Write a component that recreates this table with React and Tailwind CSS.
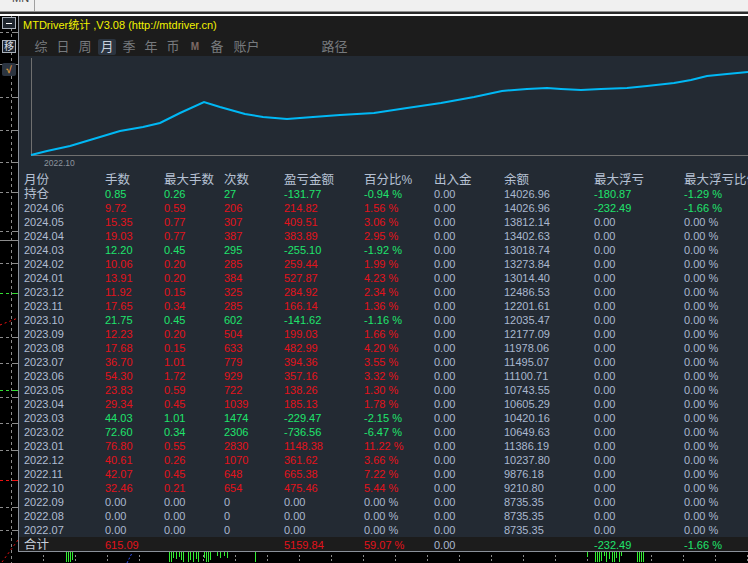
import React from "react";

const ROWS = [
  ["2024.06", "9.72", "0.59", "206", "214.82", "1.56 %", "14026.96", "-232.49", "-1.66 %"],
  ["2024.05", "15.35", "0.77", "307", "409.51", "3.06 %", "13812.14", "0.00", "0.00 %"],
  ["2024.04", "19.03", "0.77", "387", "383.89", "2.95 %", "13402.63", "0.00", "0.00 %"],
  ["2024.03", "12.20", "0.45", "295", "-255.10", "-1.92 %", "13018.74", "0.00", "0.00 %"],
  ["2024.02", "10.06", "0.20", "285", "259.44", "1.99 %", "13273.84", "0.00", "0.00 %"],
  ["2024.01", "13.91", "0.20", "384", "527.87", "4.23 %", "13014.40", "0.00", "0.00 %"],
  ["2023.12", "11.92", "0.15", "325", "284.92", "2.34 %", "12486.53", "0.00", "0.00 %"],
  ["2023.11", "17.65", "0.34", "285", "166.14", "1.36 %", "12201.61", "0.00", "0.00 %"],
  ["2023.10", "21.75", "0.45", "602", "-141.62", "-1.16 %", "12035.47", "0.00", "0.00 %"],
  ["2023.09", "12.23", "0.20", "504", "199.03", "1.66 %", "12177.09", "0.00", "0.00 %"],
  ["2023.08", "17.68", "0.15", "633", "482.99", "4.20 %", "11978.06", "0.00", "0.00 %"],
  ["2023.07", "36.70", "1.01", "779", "394.36", "3.55 %", "11495.07", "0.00", "0.00 %"],
  ["2023.06", "54.30", "1.72", "929", "357.16", "3.32 %", "11100.71", "0.00", "0.00 %"],
  ["2023.05", "23.83", "0.59", "722", "138.26", "1.30 %", "10743.55", "0.00", "0.00 %"],
  ["2023.04", "29.34", "0.45", "1039", "185.13", "1.78 %", "10605.29", "0.00", "0.00 %"],
  ["2023.03", "44.03", "1.01", "1474", "-229.47", "-2.15 %", "10420.16", "0.00", "0.00 %"],
  ["2023.02", "72.60", "0.34", "2306", "-736.56", "-6.47 %", "10649.63", "0.00", "0.00 %"],
  ["2023.01", "76.80", "0.55", "2830", "1148.38", "11.22 %", "11386.19", "0.00", "0.00 %"],
  ["2022.12", "40.61", "0.26", "1070", "361.62", "3.66 %", "10237.80", "0.00", "0.00 %"],
  ["2022.11", "42.07", "0.45", "648", "665.38", "7.22 %", "9876.18", "0.00", "0.00 %"],
  ["2022.10", "32.46", "0.21", "654", "475.46", "5.44 %", "9210.80", "0.00", "0.00 %"],
  ["2022.09", "0.00", "0.00", "0", "0.00", "0.00 %", "8735.35", "0.00", "0.00 %"],
  ["2022.08", "0.00", "0.00", "0", "0.00", "0.00 %", "8735.35", "0.00", "0.00 %"],
  ["2022.07", "0.00", "0.00", "0", "0.00", "0.00 %", "8735.35", "0.00", "0.00 %"],
];

const HEADERS = ["月份", "手数", "最大手数", "次数", "盈亏金额", "百分比%", "出入金", "余额", "最大浮亏", "最大浮亏比例"];

const TABS = ["综", "日", "周", "月", "季", "年", "币", "M", "备"];

const RED = "text-[#e3121b]";
const GREEN = "text-[#1fe46c]";
const GRAY = "text-[#aab8cf]";

const COLS = "grid grid-cols-[81px_59px_60px_60px_80px_70px_70px_90px_90px_120px]";

const LINE = [
  [12, 99], [28, 95], [51, 90], [81, 81], [101, 75], [124, 71], [141, 67], [161, 57],
  [185, 46], [201, 51], [226, 58], [244, 61], [268, 63], [294, 61], [321, 59], [355, 57],
  [388, 52], [422, 47], [455, 41], [483, 35], [508, 33], [528, 32], [542, 33], [562, 34],
  [582, 33], [608, 32], [628, 30], [655, 27], [672, 24], [688, 20], [708, 18], [729, 16],
];

// price-axis ticks on the left strip: [y, colour]
const TICKS = [
  [16, "#8c8c8c"], [48, "#8c8c8c"], [81, "#8c8c8c"], [114, "#8c8c8c"], [146, "#8c8c8c"],
  [176, "#8c8c8c"], [215, "#8c8c8c"], [247, "#8c8c8c"], [277, "#33dd33"], [321, "#8c8c8c"],
  [347, "#8c8c8c"], [374, "#33dd33"], [381, "#8c8c8c"], [407, "#8c8c8c"], [434, "#8c8c8c"],
  [464, "#ee1111"], [491, "#8c8c8c"], [514, "#8c8c8c"],
];

// volume bars in the bottom strip: [x, length]
const BARS = [
  [48, 10], [50, 10], [52, 10], [54, 8],
  [151, 10], [153, 10], [155, 6], [158, 7], [161, 5], [163, 8], [165, 10], [170, 10],
  [172, 8], [175, 10], [178, 7], [180, 10], [186, 6], [188, 10], [190, 10], [192, 8],
  [199, 4], [202, 6], [206, 4], [209, 6], [237, 10],
  [569, 5], [577, 10], [579, 10], [581, 10], [583, 9], [586, 4], [588, 10], [591, 7],
  [594, 10], [596, 10], [598, 6], [601, 10], [603, 4],
  [619, 10], [621, 10], [623, 10], [625, 10],
];

function cellColor(pnl) {
  if (pnl === "0.00") return GRAY;
  return pnl.startsWith("-") ? GREEN : RED;
}

function Cjk({ children, className = "" }) {
  return <span className={`text-[12.5px] ${className}`}>{children}</span>;
}

function LeftStrip() {
  return (
    <div className="relative w-[18px] shrink-0 bg-black">
      <svg className="absolute inset-0" width="18" height="547">
        <line x1="11.5" y1="0" x2="11.5" y2="547" stroke="#8c8c8c" strokeDasharray="3 3" />
        <line x1="0" y1="224.5" x2="18" y2="224.5" stroke="#8c8c8c" />
        {TICKS.map(([y, c]) => (
          <g key={y}>
            <line x1="0" y1={y + 0.5} x2="11" y2={y + 0.5} stroke={c} strokeDasharray="3 3" />
            <line x1="12" y1={y + 0.5} x2="18" y2={y + 0.5} stroke={c} />
          </g>
        ))}
        <line x1="0" y1="309" x2="18" y2="302" stroke="#ee1111" strokeDasharray="2 3" />
        <line x1="2" y1="546" x2="18" y2="524" stroke="#ee1111" strokeDasharray="2 3" />
      </svg>
      <div className="relative flex flex-col items-center pt-[1px]">
        <div className="flex h-[12px] w-[14px] items-center justify-center border border-[#a9b1bb] bg-[#1e252e]">
          <div className="h-[1px] w-[6px] bg-white" />
        </div>
        <div className="mt-[11px] flex h-[13px] w-[14px] items-center justify-center border border-[#a9b1bb] bg-[#1e252e] text-[10px] leading-none text-[#d6dde6]">
          移
        </div>
        <div className="mt-[10px] flex h-[13px] w-[14px] items-center justify-center rounded-[2px] bg-[#2b3440] text-[10px] font-bold leading-none text-[#e39a3a]">
          √
        </div>
      </div>
    </div>
  );
}

function Chart() {
  return (
    <svg width="729" height="117" className="block">
      <line x1="12.5" y1="2" x2="12.5" y2="99" stroke="#707070" />
      <line x1="12" y1="99.5" x2="729" y2="99.5" stroke="#707070" />
      <polyline
        points={LINE.map((p) => p.join(",")).join(" ")}
        fill="none"
        stroke="#00b8f5"
        strokeWidth="2"
      />
      <text x="25" y="110" fontSize="8.5" fill="#8d949e" fontFamily="Liberation Sans, sans-serif">
        2022.10
      </text>
    </svg>
  );
}

function BottomStrip() {
  const ticks = [];
  for (let x = 25; x < 730; x += 32) ticks.push(x);
  return (
    <svg width="730" height="11" className="block">
      {ticks.map((x) => (
        <line key={x} x1={x + 0.5} y1="3" x2={x + 0.5} y2="11" stroke="#8c8c8c" strokeDasharray="2 2" />
      ))}
      {BARS.map(([x, h]) => (
        <line key={x} x1={x + 0.5} y1="0" x2={x + 0.5} y2={h} stroke="#33ee33" />
      ))}
      <line x1="109" y1="11" x2="114" y2="1" stroke="#3355ff" strokeDasharray="2 2" />
    </svg>
  );
}

export default function App() {
  return (
    <div className="flex h-[563px] w-[748px] flex-col overflow-hidden bg-black font-['Liberation_Sans','Noto_Sans_CJK_SC',sans-serif]">
      {/* ── Terminal strip above ── */}
      <div className="flex h-[11px] shrink-0 bg-[#f0f0f0]">
        <div className="w-[35px] overflow-hidden border-r border-[#a0a0a0] pl-[12px] text-[11px] leading-none text-[#444]">
          <div className="-mt-[7px]">MN</div>
        </div>
      </div>
      <div className="h-[1px] shrink-0 bg-[#909090]" />
      <div className="h-[2px] shrink-0 bg-[#2a2a2a]" />
      <div className="h-[2px] shrink-0 bg-white" />

      <div className="flex min-h-0 flex-1">
        <LeftStrip />

        <div className="flex min-w-0 flex-1 flex-col">
          {/* ── Stats panel ── */}
          <div className="flex flex-col border-b border-l border-[#8a9099] bg-[#232a33]">
            <div className="h-[40px] bg-[#1c1c1c]">
              <div className="h-[17px] whitespace-nowrap pl-[4px] pt-[1px] text-[11px] leading-[16px] text-[#f2f200]">
                MTDriver统计 ,V3.08 (http://mtdriver.cn)
              </div>
              <div className="mt-[6px] flex h-[16px] items-center pl-[11px] text-[13px] leading-[16px] text-[#777a7e]">
                {TABS.map((t) =>
                  t === "月" ? (
                    <div key={t} className="flex w-[22px] justify-center">
                      <span className="w-[18px] rounded-[2px] bg-[#2b3440] text-center text-[#c9d1dc]">{t}</span>
                    </div>
                  ) : t === "M" ? (
                    <div key={t} className="w-[22px] text-center text-[10px] font-bold text-[#7d6a66]">
                      {t}
                    </div>
                  ) : (
                    <div key={t} className="w-[22px] text-center">
                      {t}
                    </div>
                  )
                )}
                <div className="w-[37px] text-center">账户</div>
                <div className="ml-[51px] w-[37px] text-center">路径</div>
              </div>
            </div>

            <Chart />

            {/* ── Table ── */}
            <div className="whitespace-nowrap text-[11px] leading-[14px]">
              <div className={`${COLS} h-[14px] pl-[5px] text-[#b6c1d3]`}>
                {HEADERS.map((h) =>
                  h === "百分比%" ? (
                    <div key={h}>
                      <Cjk>百分比</Cjk>
                      <span className="text-[12px]">%</span>
                    </div>
                  ) : (
                    <div key={h}>
                      <Cjk>{h}</Cjk>
                    </div>
                  )
                )}
              </div>

              <div className={`${COLS} h-[14px] pl-[5px]`}>
                <div className="text-[#b6c1d3]">
                  <Cjk>持仓</Cjk>
                </div>
                <div className={GREEN}>0.85</div>
                <div className={GREEN}>0.26</div>
                <div className={GREEN}>27</div>
                <div className={GREEN}>-131.77</div>
                <div className={GREEN}>-0.94 %</div>
                <div className={GRAY}>0.00</div>
                <div className={GRAY}>14026.96</div>
                <div className={GREEN}>-180.87</div>
                <div className={GREEN}>-1.29 %</div>
              </div>

              {ROWS.map(([m, lots, maxLots, count, pnl, pct, bal, dd, ddPct]) => {
                const c = cellColor(pnl);
                const d = dd === "0.00" ? GRAY : GREEN;
                return (
                  <div key={m} className={`${COLS} h-[14px] pl-[5px]`}>
                    <div className="text-[#b0bdd2]">{m}</div>
                    <div className={c}>{lots}</div>
                    <div className={c}>{maxLots}</div>
                    <div className={c}>{count}</div>
                    <div className={c}>{pnl}</div>
                    <div className={c}>{pct}</div>
                    <div className={GRAY}>0.00</div>
                    <div className={GRAY}>{bal}</div>
                    <div className={d}>{dd}</div>
                    <div className={d}>{ddPct}</div>
                  </div>
                );
              })}

              <div className={`${COLS} h-[14px] bg-[#1c1c1c] pl-[5px] pt-[1px]`}>
                <div className="text-[#c8d0dc]">
                  <Cjk>合计</Cjk>
                </div>
                <div className={RED}>615.09</div>
                <div />
                <div />
                <div className={RED}>5159.84</div>
                <div className={RED}>59.07 %</div>
                <div className={GRAY}>0.00</div>
                <div />
                <div className={GREEN}>-232.49</div>
                <div className={GREEN}>-1.66 %</div>
              </div>
            </div>
          </div>

          <BottomStrip />
        </div>
      </div>
    </div>
  );
}
